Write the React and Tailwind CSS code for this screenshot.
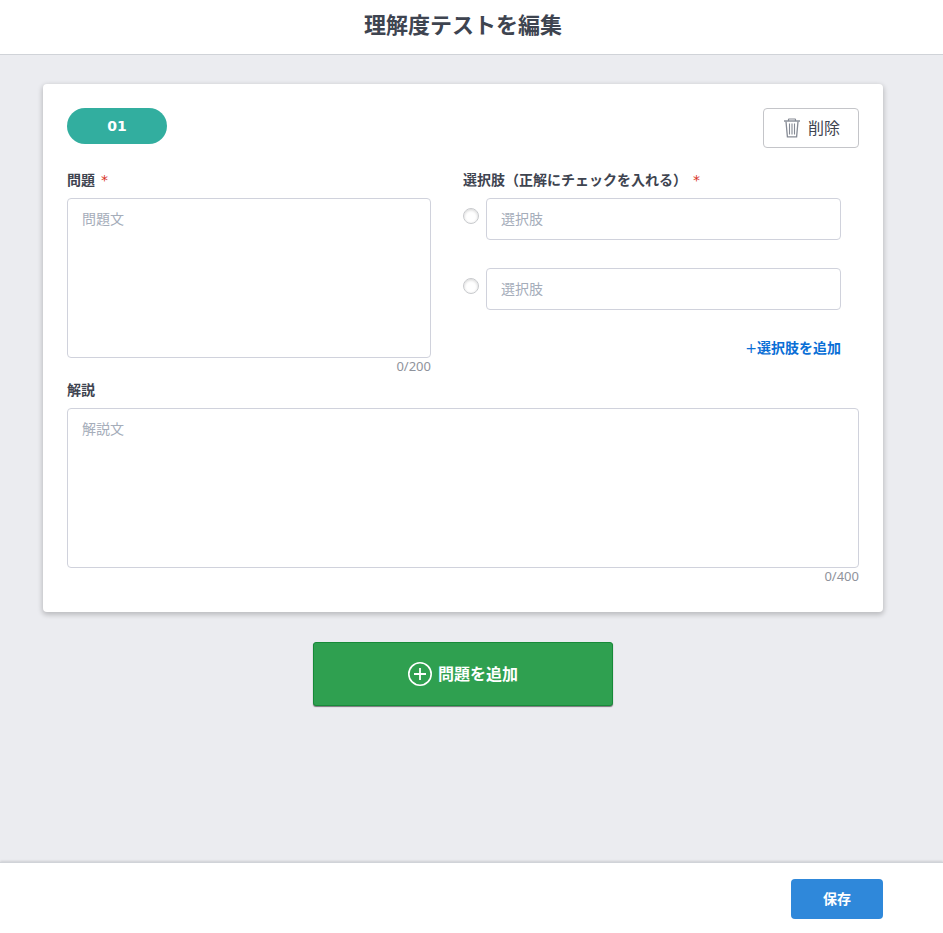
import React, { useState } from 'react';

const RequiredMark = () => (
  <span className="ml-1.5 font-normal text-[#d8321f] font-['DejaVu_Sans']">*</span>
);

const FieldLabel = ({ htmlFor, required, children }) => (
  <label htmlFor={htmlFor} className="block mb-2 text-sm leading-5 font-bold text-[#3e4450]">
    {children}
    {required && <RequiredMark />}
  </label>
);

const CountedTextarea = ({ id, placeholder, max }) => {
  const [value, setValue] = useState('');

  return (
    <div>
      <textarea
        id={id}
        value={value}
        maxLength={max}
        onChange={(e) => setValue(e.target.value)}
        placeholder={placeholder}
        className="block w-full h-40 px-3.5 py-2.5 text-sm leading-5 bg-white border border-[#d0d2dc] rounded resize-none placeholder:text-[#a5adba] focus:outline-none focus:border-[#2f88da]"
      />
      <p className="mb-1 text-[13px] leading-4 text-right text-[#8f939c]">
        {value.length}/{max}
      </p>
    </div>
  );
};

const Choice = ({ name, index }) => (
  <div className="flex items-start gap-[7px]">
    <input
      type="radio"
      name={name}
      aria-label={`選択肢${index + 1}を正解にする`}
      className="appearance-none shrink-0 mt-2.5 size-4 rounded-full border border-[#c8cacd] bg-white shadow-[inset_0_1px_3px_#d4d4d4] checked:bg-[#2f88da]"
    />
    <input
      type="text"
      aria-label={`選択肢${index + 1}`}
      placeholder="選択肢"
      className="min-w-0 flex-1 h-[42px] px-3.5 pb-0.5 text-sm bg-white border border-[#d0d2dc] rounded placeholder:text-[#a5adba] focus:outline-none focus:border-[#2f88da]"
    />
  </div>
);

const TrashIcon = () => (
  <svg viewBox="0 0 16 20" className="w-4 h-5" fill="none" stroke="#858a94" aria-hidden="true">
    <path d="M0 3h16" strokeWidth="1.4" />
    <path d="M4.5 3V1.500q0-.5.5-.5h6q.5 0 .5.500V3" strokeWidth="1.2" />
    <path d="M2 3.500l1.400 15.400h9.200L14 3.500" strokeWidth="1.3" />
    <path d="M5.500 5.500v11M8 5.500v11M10.500 5.500v11" strokeWidth="1.1" />
  </svg>
);

const PlusCircleIcon = () => (
  <svg viewBox="0 0 24 24" className="size-6" fill="none" stroke="#fff" aria-hidden="true">
    <circle cx="12" cy="12" r="11.200" strokeWidth="1.600" />
    <path d="M12 6v12M6 12h12" strokeWidth="1.800" />
  </svg>
);

const QuestionCard = ({ number, choices, onAddChoice }) => (
  <section className="p-6 bg-white rounded shadow-[0_2px_5px_1px_rgba(0,0,0,0.2)]">
    <div className="flex items-start justify-between mb-[22px]">
      <span className="flex items-center justify-center w-[100px] h-9 rounded-full bg-[#32ae9f] text-white text-sm font-bold font-['DejaVu_Sans']">
        {number}
      </span>
      <button
        type="button"
        className="flex items-center justify-center gap-2 w-24 h-10 pl-0.5 bg-white border border-[#c4c5c9] rounded text-base text-[#3e4450]"
      >
        <TrashIcon />
        削除
      </button>
    </div>

    <div className="flex">
      <div className="w-1/2 pr-8">
        <FieldLabel htmlFor="question" required>問題</FieldLabel>
        <CountedTextarea id="question" placeholder="問題文" max={200} />
      </div>
      <fieldset className="w-1/2 min-w-0 pr-[18px]">
        <legend className="mb-2 text-sm leading-5 font-bold text-[#3e4450]">
          選択肢（正解にチェックを入れる）
          <RequiredMark />
        </legend>
        <div className="flex flex-col gap-7">
          {choices.map((id, index) => (
            <Choice key={id} name="answer" index={index} />
          ))}
        </div>
        <div className="flex justify-end mt-7">
          <button type="button" onClick={onAddChoice} className="text-sm leading-5 font-bold text-[#0a6fd6]">
            <span className="font-normal font-['DejaVu_Sans']">+</span>
            選択肢を追加
          </button>
        </div>
      </fieldset>
    </div>

    <div className="mt-0.5">
      <FieldLabel htmlFor="explanation">解説</FieldLabel>
      <CountedTextarea id="explanation" placeholder="解説文" max={400} />
    </div>
  </section>
);

export default function App() {
  const [choices, setChoices] = useState([1, 2]);

  return (
    <div className="flex flex-col min-h-screen bg-[#ebecf0] font-['Noto_Sans','Noto_Sans_CJK_JP',sans-serif] text-[#3e4450]">
      <header className="pt-2 pb-3.5 pr-[17px] bg-white border-b border-[#d0d3d8] text-center">
        <h1 className="text-[22px] leading-8 font-bold">理解度テストを編集</h1>
      </header>

      <main className="flex-1 pt-[29px] pb-8 pl-[43px] pr-[60px]">
        <QuestionCard
          number="01"
          choices={choices}
          onAddChoice={() => setChoices(prev => [...prev, prev.length + 1])}
        />
        <button
          type="button"
          className="flex items-center justify-center gap-1.5 w-[300px] h-16 mt-[30px] mx-auto bg-[#2fa050] border border-[#168a38] rounded-[3px] shadow-[0_1px_1px_rgba(0,0,0,0.5)] text-base font-bold text-white"
        >
          <PlusCircleIcon />
          問題を追加
        </button>
      </main>

      <footer className="flex justify-end pt-4 pb-3.5 pr-[60px] bg-white border-t border-[#d0d3d8] shadow-[0_-1px_2px_rgba(0,0,0,0.12)]">
        <button type="button" className="w-[92px] h-10 rounded bg-[#2f88da] text-sm font-bold text-white">
          保存
        </button>
      </footer>
    </div>
  );
}
